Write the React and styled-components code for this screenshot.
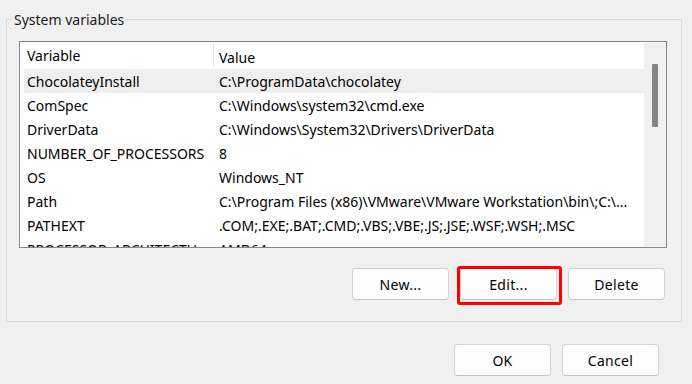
import React from "react";
import styled, { createGlobalStyle } from "styled-components";

const GlobalStyle = createGlobalStyle`
  html, body { margin: 0; padding: 0; background: #f0f0f0; }
  body {
    font-family: "Noto Sans", "Open Sans", sans-serif;
    font-size: 14px;
    color: #000;
  }
  * { box-sizing: border-box; }
`;

const Window = styled.div`
  width: 692px;
  height: 384px;
  background: #f0f0f0;
  overflow: hidden;
  display: flex;
  flex-direction: column;
`;

const GroupBox = styled.fieldset`
  margin: 10px 10px 0 6px;
  padding: 0;
  min-width: 0;
  border: 1px solid #dadada;
`;

const Legend = styled.legend`
  margin-left: 5px;
  padding: 0 2px;
  line-height: 19px;
  font-size: 14px;
  color: #1a1a1a;
`;

const ListView = styled.div`
  margin: 12px 14px 0 12px;
  height: 207px;
  border: 1px solid #828790;
  background: #fff;
  display: flex;
  overflow: hidden;
`;

const ListBody = styled.div`
  flex: 1;
  min-width: 0;
  overflow: hidden;
`;

const HeaderRow = styled.div`
  display: grid;
  grid-template-columns: 194px 1fr;
  height: 27px;
`;

const HeaderCell = styled.div`
  display: flex;
  align-items: center;
  padding-top: 3px;
  padding-left: ${(p) => (p.$first ? "7px" : "5px")};
  white-space: nowrap;
  overflow: hidden;
  ${(p) =>
    p.$first &&
    `
    border-right: 1px solid #e5e5e5;
    margin: 1px 0 2px 0;
    padding-top: 1px;
  `}
`;

const Row = styled.div`
  display: grid;
  grid-template-columns: 190px 1fr;
  height: 24px;
  margin-left: 4px;
  background: ${(p) => (p.$selected ? "#efefef" : "transparent")};
`;

const Cell = styled.div`
  display: flex;
  align-items: center;
  padding-left: ${(p) => (p.$first ? "3px" : "5px")};
  white-space: nowrap;
  overflow: hidden;
`;

const Scrollbar = styled.div`
  width: 22px;
  flex: none;
  margin-top: 1px;
  background: #f0f0f0;
  padding: 21px 0 0 8px;
`;

const Thumb = styled.div`
  width: 6px;
  height: 63px;
  background: #858585;
  border-radius: 1px;
`;

const ButtonRow = styled.div`
  display: flex;
  justify-content: flex-end;
  gap: 11px;
  padding: 20px 16px 21px 0;
`;

const Button = styled.button`
  width: 97px;
  height: 32px;
  padding: 0;
  border: 1px solid #d3d3d3;
  border-bottom-color: #c2c2c2;
  border-radius: 4px;
  background: #fdfdfd;
  font-family: inherit;
  font-size: 14px;
  letter-spacing: 0.3px;
  color: #000;
  cursor: default;
`;

const HighlightWrap = styled.div`
  position: relative;
  display: flex;
`;

const RedFrame = styled.div`
  position: absolute;
  left: -3px;
  top: -2px;
  right: -5px;
  bottom: -5px;
  border: 3px solid #ff0000;
  border-radius: 3px;
  pointer-events: none;
`;

const DialogButtons = styled.div`
  display: flex;
  justify-content: flex-end;
  gap: 11px;
  margin-top: 22px;
  padding-right: 33px;
`;

const rows = [
  ["ChocolateyInstall", "C:\\ProgramData\\chocolatey", true],
  ["ComSpec", "C:\\Windows\\system32\\cmd.exe"],
  ["DriverData", "C:\\Windows\\System32\\Drivers\\DriverData"],
  ["NUMBER_OF_PROCESSORS", "8"],
  ["OS", "Windows_NT"],
  ["Path", "C:\\Program Files (x86)\\VMware\\VMware Workstation\\bin\\;C:\\..."],
  ["PATHEXT", ".COM;.EXE;.BAT;.CMD;.VBS;.VBE;.JS;.JSE;.WSF;.WSH;.MSC"],
  ["PROCESSOR_ARCHITECTU...", "AMD64"],
];

export default function App() {
  return (
    <>
      <GlobalStyle />
      <Window>
        <GroupBox>
          <Legend>System variables</Legend>
          <ListView>
            <ListBody>
              <HeaderRow>
                <HeaderCell $first>Variable</HeaderCell>
                <HeaderCell>Value</HeaderCell>
              </HeaderRow>
              {rows.map(([name, value, sel]) => (
                <Row key={name} $selected={sel}>
                  <Cell $first>{name}</Cell>
                  <Cell>{value}</Cell>
                </Row>
              ))}
            </ListBody>
            <Scrollbar>
              <Thumb />
            </Scrollbar>
          </ListView>
          <ButtonRow>
            <Button>New...</Button>
            <HighlightWrap>
              <Button>Edit...</Button>
              <RedFrame />
            </HighlightWrap>
            <Button>Delete</Button>
          </ButtonRow>
        </GroupBox>
        <DialogButtons>
          <Button>OK</Button>
          <Button>Cancel</Button>
        </DialogButtons>
      </Window>
    </>
  );
}
